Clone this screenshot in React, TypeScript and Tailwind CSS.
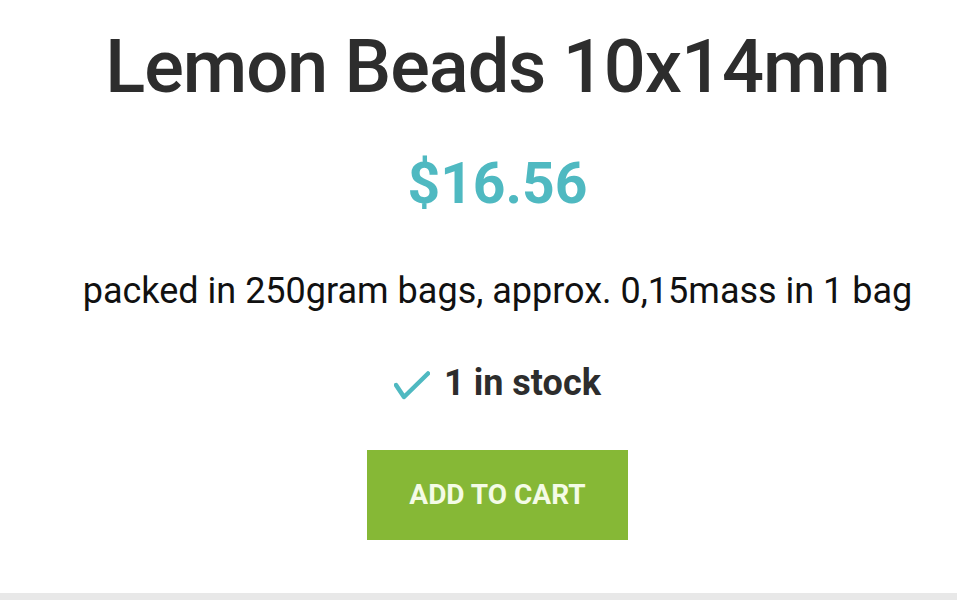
import * as React from 'react'

function StockCheck() {
  return (
    <svg width="36" height="30" viewBox="0 0 36 30" fill="none" className="mt-[5px]">
      <polyline
        points="2,14 10,26 34,2.5"
        stroke="#4fb9c1"
        strokeWidth="4.5"
        strokeLinecap="round"
        strokeLinejoin="round"
      />
    </svg>
  )
}

export default function App() {
  return (
    <div className="flex h-[600px] w-[957px] flex-col bg-white font-['Roboto',sans-serif]">
      <div className="flex flex-1 flex-col items-center pl-[38px]">
        <h1 className="mt-[21px] h-[92px] text-[74px] font-medium leading-[92px] tracking-[-1.05px] text-[#2d2d2d]">
          Lemon Beads 10x14mm
        </h1>
        <div className="mt-[36px] h-[70px] text-[57px] font-bold leading-[70px] text-[#4fb9c1]">
          $16.56
        </div>
        <p className="mt-[52px] h-[40px] text-[36px] leading-[40px] text-[#111]">
          packed in 250gram bags, approx. 0,15mass in 1 bag
        </p>
        <div className="mt-[52px] flex h-[40px] items-center gap-[14px] text-[36px] font-bold leading-[40px] text-[#2d2d2d]">
          <StockCheck />
          <span>1 in stock</span>
        </div>
        <button
          type="button"
          className="mt-[47px] h-[90px] w-[261px] bg-[#86b836] text-[28px] font-bold uppercase text-[#f4fbe6]"
        >
          Add to cart
        </button>
      </div>
      <div className="h-[7px] bg-[#e8e8e8]" />
    </div>
  )
}
